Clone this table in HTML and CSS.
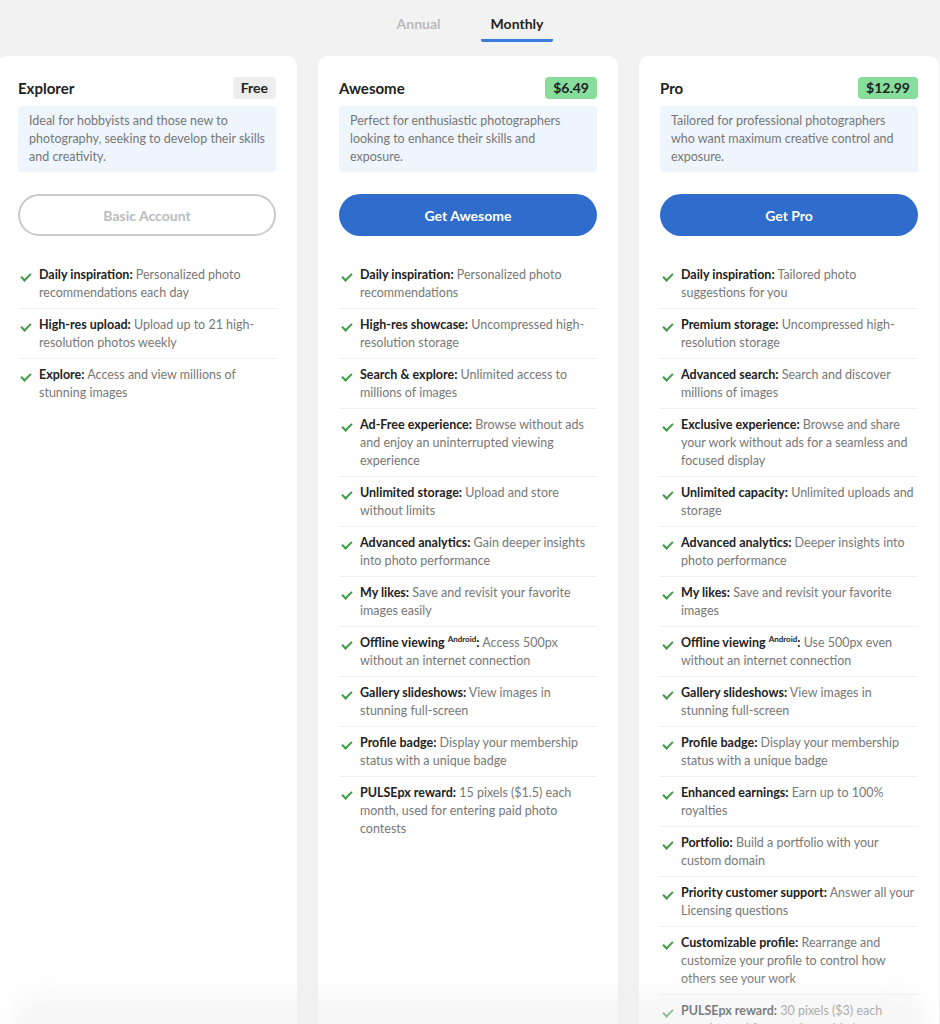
FILE: index.html
```html
<!DOCTYPE html>
<html lang="en">
<head>
  <meta charset="UTF-8"/>
  <meta name="viewport" content="width=device-width, initial-scale=1.0"/>
  <title>Plans</title>
  <link rel="stylesheet" href="styles.css">
</head>
<body>
  <div class="tabs">
    <div class="tab">Annual</div>
    <div class="tab active">Monthly</div>
  </div>

  <div class="plans">
    <!-- Explorer -->
    <div class="card">
      <div class="head"><h2>Explorer</h2><span class="price free">Free</span></div>
      <p class="desc">Ideal for hobbyists and those new to photography, seeking to develop their skills and creativity.</p>
      <button class="btn basic">Basic Account</button>
      <ul class="features">
        <li><b>Daily inspiration:</b> Personalized photo recommendations each day</li>
        <li><b>High-res upload:</b> Upload up to 21 high-resolution photos weekly</li>
        <li><b>Explore:</b> Access and view millions of stunning images</li>
      </ul>
    </div>

    <!-- Awesome -->
    <div class="card">
      <div class="head"><h2>Awesome</h2><span class="price">$6.49</span></div>
      <p class="desc">Perfect for enthusiastic photographers looking to enhance their skills and exposure.</p>
      <button class="btn">Get Awesome</button>
      <ul class="features">
        <li><b>Daily inspiration:</b> Personalized photo recommendations</li>
        <li><b>High-res showcase:</b> Uncompressed high-resolution storage</li>
        <li><b>Search &amp; explore:</b> Unlimited access to millions of images</li>
        <li><b>Ad-Free experience:</b> Browse without ads and enjoy an uninterrupted viewing experience</li>
        <li><b>Unlimited storage:</b> Upload and store without limits</li>
        <li><b>Advanced analytics:</b> Gain deeper insights into photo performance</li>
        <li><b>My likes:</b> Save and revisit your favorite images easily</li>
        <li><b>Offline viewing <sup>Android</sup>:</b> Access 500px without an internet connection</li>
        <li><b>Gallery slideshows:</b> View images in stunning full-screen</li>
        <li><b>Profile badge:</b> Display your membership status with a unique badge</li>
        <li><b>PULSEpx reward:</b> 15 pixels ($1.5) each month, used for entering paid photo contests</li>
      </ul>
    </div>

    <!-- Pro -->
    <div class="card">
      <div class="head"><h2>Pro</h2><span class="price">$12.99</span></div>
      <p class="desc">Tailored for professional photographers who want maximum creative control and exposure.</p>
      <button class="btn">Get Pro</button>
      <ul class="features">
        <li><b>Daily inspiration:</b> Tailored photo suggestions for you</li>
        <li><b>Premium storage:</b> Uncompressed high-resolution storage</li>
        <li><b>Advanced search:</b> Search and discover millions of images</li>
        <li><b>Exclusive experience:</b> Browse and share your work without ads for a seamless and focused display</li>
        <li><b>Unlimited capacity:</b> Unlimited uploads and storage</li>
        <li><b>Advanced analytics:</b> Deeper insights into photo performance</li>
        <li><b>My likes:</b> Save and revisit your favorite images</li>
        <li><b>Offline viewing <sup>Android</sup>:</b> Use 500px even without an internet connection</li>
        <li><b>Gallery slideshows:</b> View images in stunning full-screen</li>
        <li><b>Profile badge:</b> Display your membership status with a unique badge</li>
        <li><b>Enhanced earnings:</b> Earn up to 100% royalties</li>
        <li><b>Portfolio:</b> Build a portfolio with your custom domain</li>
        <li><b>Priority customer support:</b> Answer all your Licensing questions</li>
        <li><b>Customizable profile:</b> Rearrange and customize your profile to control how others see your work</li>
        <li><b>PULSEpx reward:</b> 30 pixels ($3) each month, used for entering paid photo contests</li>
      </ul>
    </div>
  </div>

  <div class="fade"></div>
</body>
</html>
```

FILE: styles.css
```css
* { box-sizing: border-box; margin: 0; padding: 0; }
body {
  font-family: Lato, 'Noto Sans', sans-serif;
  background: #f2f2f2; color: #222;
  overflow: hidden;
}
.tabs { display: flex; justify-content: center; gap: 30px; padding-top: 15px; height: 56px; }
.tab { font-size: 14px; font-weight: 700; color: #bbb; padding: 0 10px; height: 27px; }
.tab.active { color: #222; border-bottom: 3px solid #3b7be0; border-radius: 0 0 2px 2px; }

.plans { display: flex; gap: 21px; margin-left: -3px; align-items: stretch; }
.card {
  flex: 0 0 300px; background: #fff; border-radius: 10px 10px 0 0;
  padding: 21px 21px 60px;
}
.head { display: flex; justify-content: space-between; align-items: center; height: 22px; }
.head h2 { font-size: 15px; font-weight: 700; }
.price {
  background: #86dd9c; font-size: 14px; font-weight: 700; padding: 2px 8px;
  border-radius: 4px; line-height: 18px;
}
.price.free { background: #ededed; }
.desc {
  margin-top: 7px; background: #eef5fd; border-radius: 4px;
  padding: 6px 6px 6px 11px; font-size: 12.5px; line-height: 18px; color: #777;
}
.btn {
  display: block; width: 100%; height: 42px; margin-top: 22px;
  border: none; border-radius: 21px; background: #2f6ccb; color: #fff;
  font: 700 14px Lato, 'Noto Sans', sans-serif; cursor: pointer;
}
.btn.basic { background: #fff; border: 2px solid #cacaca; color: #bbb; }
.features { list-style: none; margin-top: 23px; }
.features li {
  position: relative; padding: 7px 0 6px 21px; font-size: 12.5px; line-height: 18px;
  color: #777; border-bottom: 1px solid #efefef;
}
.features li:last-child { border-bottom: none; }
.features li::before {
  content: ''; position: absolute; left: 5px; top: 12px;
  width: 4px; height: 8px; border: solid #3f9b45; border-width: 0 2px 2px 0;
  transform: rotate(45deg);
}
.features b { color: #222; font-weight: 700; }
.features sup { font-size: 8px; vertical-align: 5px; line-height: 0; }
.fade {
  position: fixed; left: 10px; right: 10px; bottom: -30px; height: 64px;
  border-radius: 40px; background: rgba(238,238,238,.45); filter: blur(10px);
}
```
